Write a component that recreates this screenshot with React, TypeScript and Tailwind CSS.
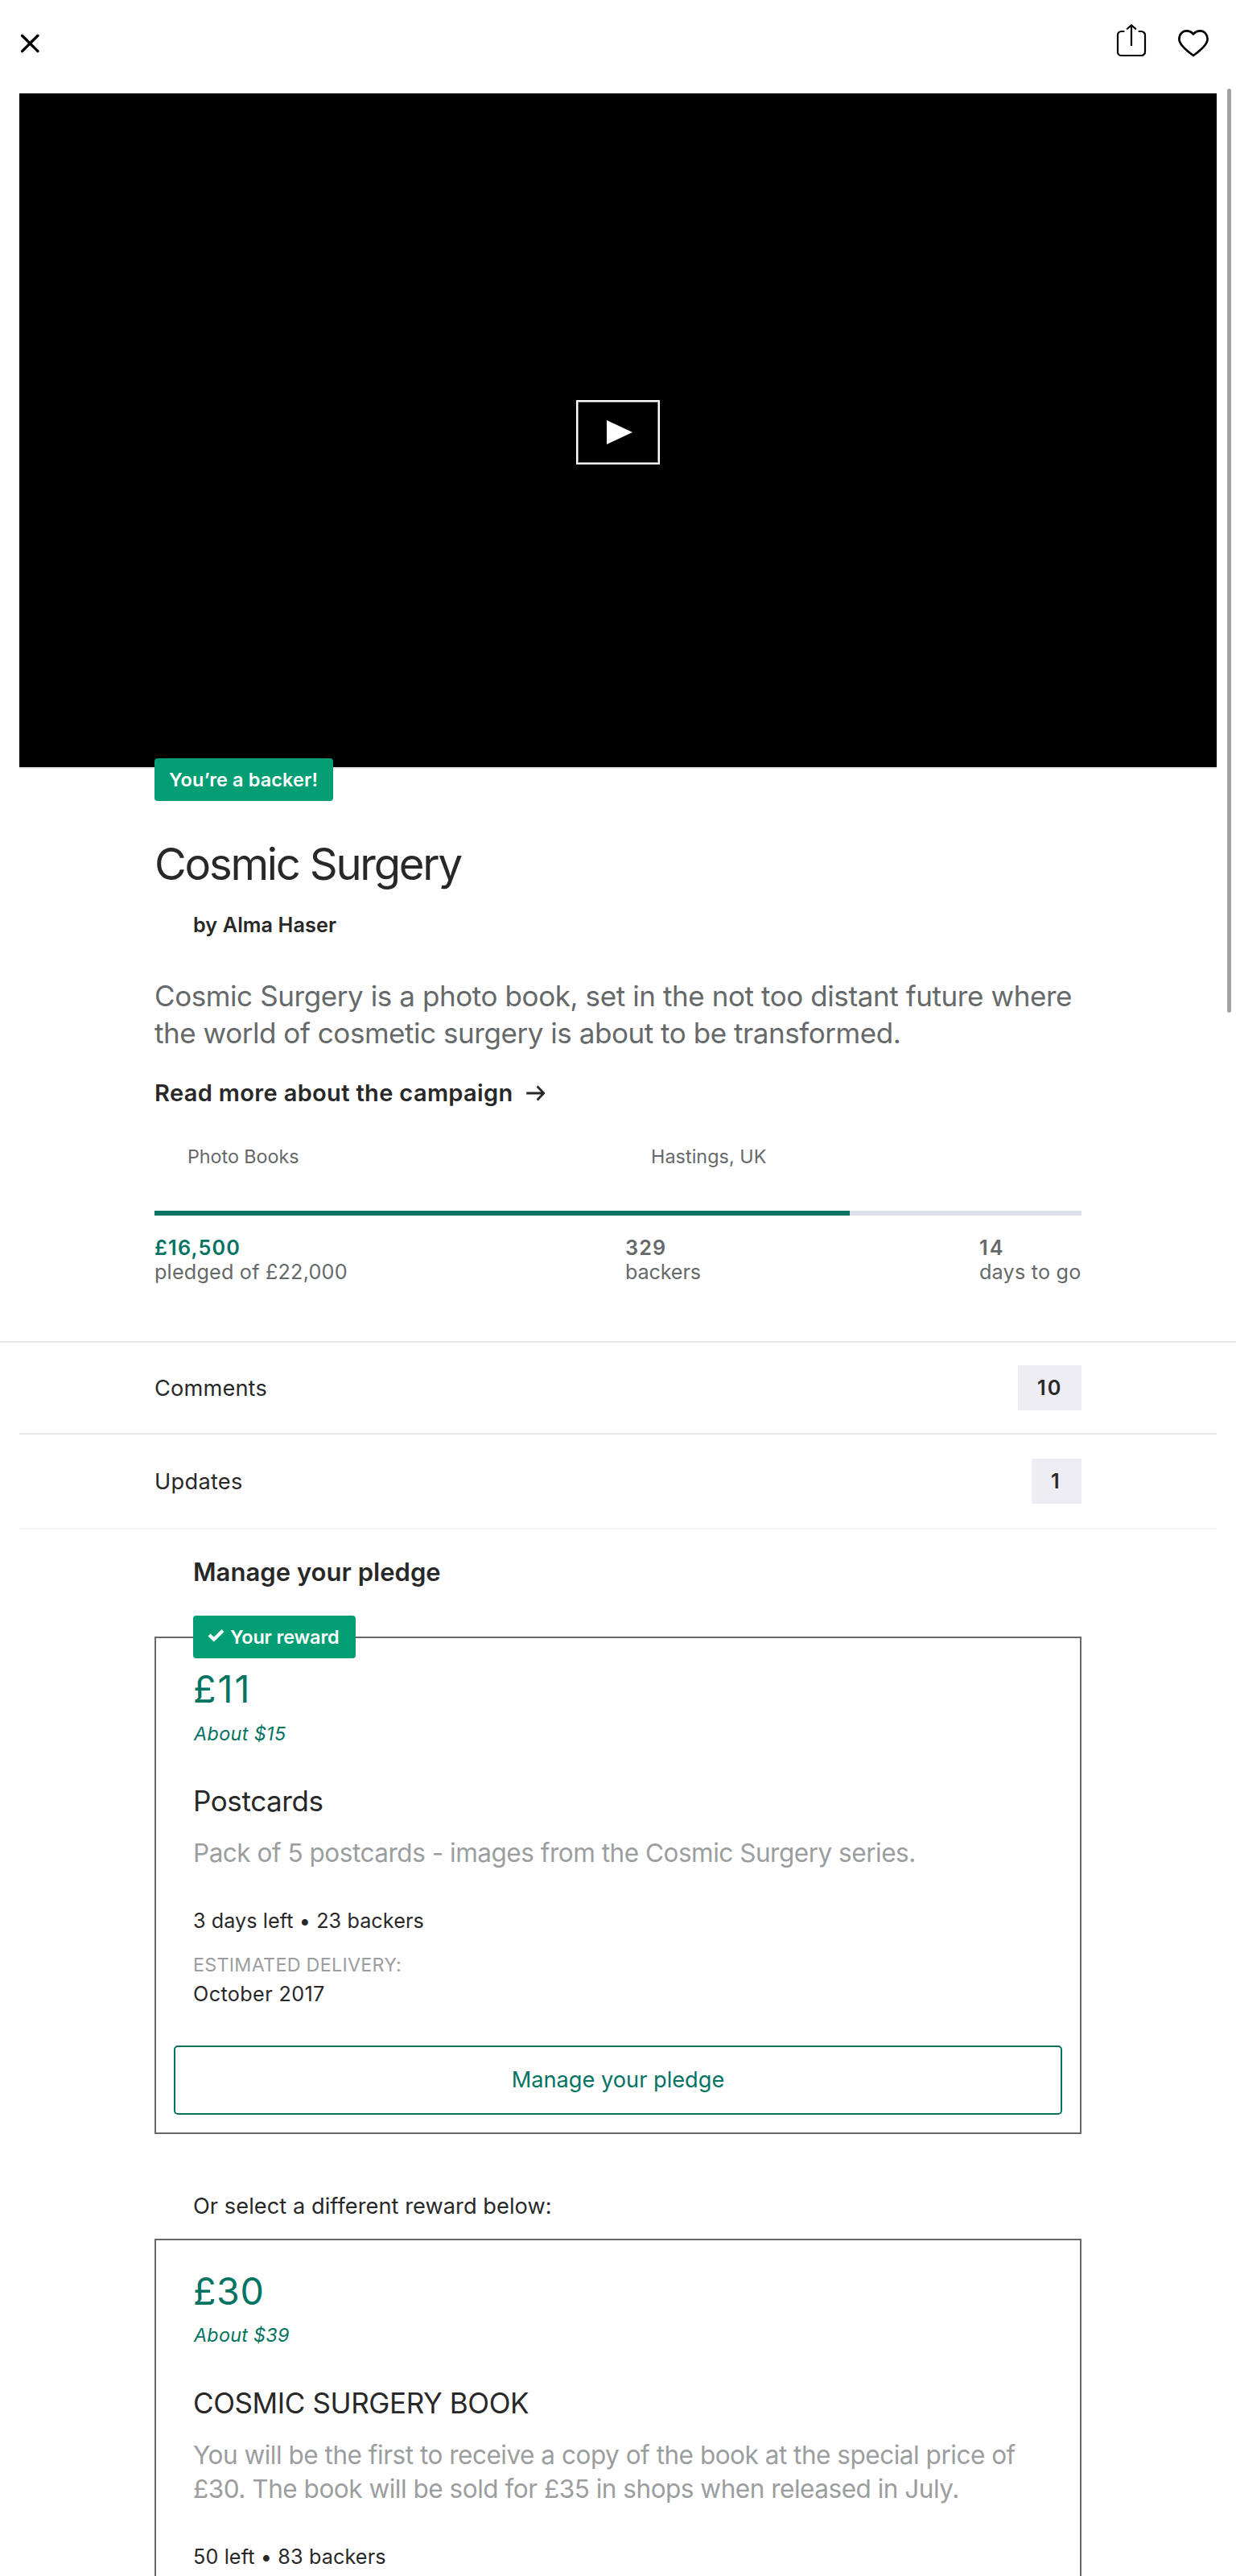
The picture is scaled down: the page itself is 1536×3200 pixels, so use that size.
import type { ReactNode } from "react";

function CloseIcon() {
  return (
    <svg width="28" height="28" viewBox="0 0 28 28" fill="none" stroke="#000" strokeWidth="3.4" strokeLinecap="round">
      <path d="M4.6 4.2 L24 23.6 M24 4.2 L4.6 23.6" />
    </svg>
  );
}

function ShareIcon() {
  return (
    <svg width="40" height="44" viewBox="0 0 40 44" fill="none" stroke="#000" strokeWidth="2.2" strokeLinecap="round">
      <path d="M10.5 11 H7.6 A4.6 4.6 0 0 0 3 15.6 V36.4 A4.6 4.6 0 0 0 7.6 41 H32.4 A4.6 4.6 0 0 0 37 36.4 V15.6 A4.6 4.6 0 0 0 32.4 11 H29.5" />
      <path d="M20 3.2 V29" strokeLinecap="butt" />
      <path d="M14.8 7.8 L20 3.2 L25.2 7.8" strokeLinejoin="round" />
    </svg>
  );
}

function HeartIcon() {
  return (
    <svg width="42" height="40" viewBox="0 0 42 40" fill="none" stroke="#000" strokeWidth="2.7" strokeLinejoin="miter">
      <path d="M21 8.2 C18.8 6 16 4.4 12.7 4.4 C7.2 4.4 3.4 8.8 3.4 14.6 C3.4 21.4 11.6 28.4 21 35 C30.4 28.4 38.6 21.4 38.6 14.6 C38.6 8.8 34.8 4.4 29.3 4.4 C26 4.4 23.2 6 21 8.2 Z" />
    </svg>
  );
}

function Stat({ value, label, className = "" }: { value: ReactNode; label: ReactNode; className?: string }) {
  return (
    <div className={`text-[25.2px] leading-[30px] ${className}`}>
      <p className="font-semibold">{value}</p>
      <p>{label}</p>
    </div>
  );
}

function CountRow({ label, count, className }: { label: ReactNode; count: ReactNode; className: string }) {
  return (
    <div className={`flex items-center justify-between px-[168px] ${className}`}>
      {label}
      {count}
    </div>
  );
}

function RewardHead({ price, about, title }: { price: ReactNode; about: ReactNode; title: ReactNode }) {
  return (
    <>
      <p className="text-[46.6px] leading-[56px] text-[#037362]">{price}</p>
      <p className="mt-[11.5px] text-[23.3px] italic leading-8 text-[#037362]">{about}</p>
      <h3 className="mt-[45.5px] text-[35px] leading-[44px] tracking-[-0.394px]">{title}</h3>
    </>
  );
}

export default function App() {
  return (
    <div className="relative h-[3200px] w-[1536px] overflow-hidden bg-white font-['Inter',sans-serif] text-[#282828]">
      <header className="flex h-[116px] items-start justify-between pl-[23px] pr-8">
        <button className="mt-[39.5px]" aria-label="Close">
          <CloseIcon />
        </button>
        <div className="flex items-start gap-[36px]">
          <button className="mt-[28px]" aria-label="Share">
            <ShareIcon />
          </button>
          <button className="mt-[34px]" aria-label="Save">
            <HeartIcon />
          </button>
        </div>
      </header>

      <div className="absolute left-[1525px] top-[110px] h-[1148px] w-[5px] rounded-full bg-[#a3a3a3]" />

      <section className="relative mx-6 border-b-2 border-[#e4e4e4]">
        <div className="flex h-[837px] items-center justify-center bg-black">
          <div className="mt-[5px] flex h-20 w-[104px] items-center justify-center border-2 border-white shadow-[inset_0_0_0_1px_#808080]">
            <svg className="ml-[4px]" width="32" height="30" viewBox="0 0 32 30">
              <path d="M0 0 L32 15 L0 30 Z" fill="#fff" />
            </svg>
          </div>
        </div>
        <div className="absolute left-[168px] top-[826px] flex h-[53px] w-[222px] items-center rounded-[4px] bg-[#039e74] pl-[18px] text-[23.4px] font-semibold tracking-[0.15px] text-white">
          You’re a backer!
        </div>
      </section>

      <section className="px-48">
        <h1 className="mt-[86px] text-[54.4px] leading-[64px] tracking-[-2.22px]">Cosmic Surgery</h1>
        <p className="ml-12 mt-7 text-[25.2px] font-semibold leading-8 tracking-[0.1px]">by Alma Haser</p>
        <p className="mt-[49px] text-[35px] leading-[46px] tracking-[-0.41px] text-[#656969]">
          Cosmic Surgery is a photo book, set in the not too distant future where{" "}
          <span className="tracking-[-0.45px]">the world of cosmetic surgery is about to be transformed.</span>
        </p>
        <p className="mt-[34px] flex items-center text-[29px] font-semibold leading-9 tracking-[0.35px]">
          Read more about the campaign
          <svg className="ml-[15px]" width="26" height="22" viewBox="0 0 26 22" fill="none" stroke="#282828" strokeWidth="2.8">
            <path d="M1.2 11 H22.6 M14.6 2.6 L22.8 11 L14.6 19.4" strokeLinejoin="round" />
          </svg>
        </p>
        <div className="mt-[45px] grid grid-cols-2 text-[23.3px] leading-8 text-[#656969]">
          <span className="ml-[41px] tracking-[-0.03px]">Photo Books</span>
          <span className="ml-[41px] tracking-[0.08px]">Hastings, UK</span>
        </div>
        <div className="mt-[51px] h-1.5 bg-[#dcdee8]">
          <div className="h-full w-3/4 bg-[#037362]" />
        </div>
        <div className="mt-[25px] flex text-[#656969]">
          <Stat
            className="w-[585px]"
            value={<span className="tracking-[1.2px] text-[#037362]">£16,500</span>}
            label={<span className="tracking-[0.2px]">pledged of £22,000</span>}
          />
          <Stat
            className="w-[440px]"
            value={<span className="tracking-[1.1px]">329</span>}
            label={<span className="tracking-[-0.15px]">backers</span>}
          />
          <Stat
            className="whitespace-nowrap"
            value={<span className="tracking-[2px]">14</span>}
            label={<span className="tracking-[0.2px]">days to go</span>}
          />
        </div>
      </section>

      <section className="mt-[71px] border-t-2 border-[#e8e8e8]">
        <CountRow
          className="mx-6 h-[114px] border-b-2 border-[#e8e8e8]"
          label={<span className="pt-0.5 text-[27.2px] tracking-[0.15px]">Comments</span>}
          count={
            <span className="flex h-14 w-[79px] items-center bg-[#eeedf3] pl-[24px] pt-0.5 text-[25.2px] font-semibold tracking-[2px]">
              10
            </span>
          }
        />
        <CountRow
          className="mx-6 h-[118px] border-b-2 border-[#f5f5f5]"
          label={<span className="pt-0.5 text-[27.2px] tracking-[0.29px]">Updates</span>}
          count={
            <span className="flex h-14 w-[62px] items-center bg-[#eeedf3] pl-[24px] pt-0.5 text-[25.2px] font-semibold">1</span>
          }
        />
      </section>

      <section className="px-48">
        <h2 className="ml-12 mt-[33px] text-[31px] font-semibold leading-10 tracking-[0.03px]">Manage your pledge</h2>
        <article className="relative mt-[60px] border-2 border-[#656969] px-[22px] pb-[22px] pt-[35px]">
          <div className="absolute left-[46px] top-[-28px] flex h-[53px] w-[202px] items-center rounded-[4px] bg-[#039e74] pl-[18px] text-[23.4px] font-semibold tracking-[-0.11px] text-white">
            <svg className="mb-[5px] mr-[7px]" width="21" height="17" viewBox="0 0 21 17" fill="none" stroke="#fff" strokeWidth="4.2">
              <path d="M2 8 L7.8 13.6 L19 2.6" />
            </svg>
            Your reward
          </div>
          <div className="px-6">
            <RewardHead
              price={<span className="tracking-[2.1px]">£11</span>}
              about={<span className="ml-[1px] tracking-[0.4px]">About $15</span>}
              title="Postcards"
            />
            <p className="mt-[21.5px] text-[31.5px] leading-[42px] tracking-[-0.48px] text-[#9b9e9e]">
              Pack of 5 postcards - images from the Cosmic Surgery series.
            </p>
            <p className="mt-[47.5px] text-[25.2px] leading-8 tracking-[0.07px]">3 days left • 23 backers</p>
            <p className="mt-[22.5px] text-[23.3px] leading-8 tracking-[0.28px] text-[#9b9e9e]">ESTIMATED DELIVERY:</p>
            <p className="mt-1 text-[25.2px] leading-8 tracking-[0.38px]">October 2017</p>
          </div>
          <button className="mt-[48px] flex h-[86px] w-full items-center justify-center rounded-[5px] border-2 border-[#037362] pt-0.5 text-[27.2px] text-[#037362]">
            Manage your pledge
          </button>
        </article>
        <p className="ml-12 mt-[72px] text-[27.2px] leading-9 tracking-[0.06px]">Or select a different reward below:</p>
        <article className="mt-[22px] h-[600px] border-2 border-[#656969] px-[46px] pt-[35px]">
          <RewardHead
            price={<span className="tracking-[0.58px]">£30</span>}
            about={<span className="ml-[1px] tracking-[0.3px]">About $39</span>}
            title="COSMIC SURGERY BOOK"
          />
          <p className="mt-[22.5px] text-[31.5px] leading-[42px] tracking-[-0.48px] text-[#9b9e9e]">
            You will be the first to receive a copy of the book at the special price of £30. The book will be sold for £35 in
            shops when released in July.
          </p>
          <p className="mt-[46.5px] text-[25.2px] leading-8 tracking-[0.12px]">50 left • 83 backers</p>
        </article>
      </section>
    </div>
  );
}
